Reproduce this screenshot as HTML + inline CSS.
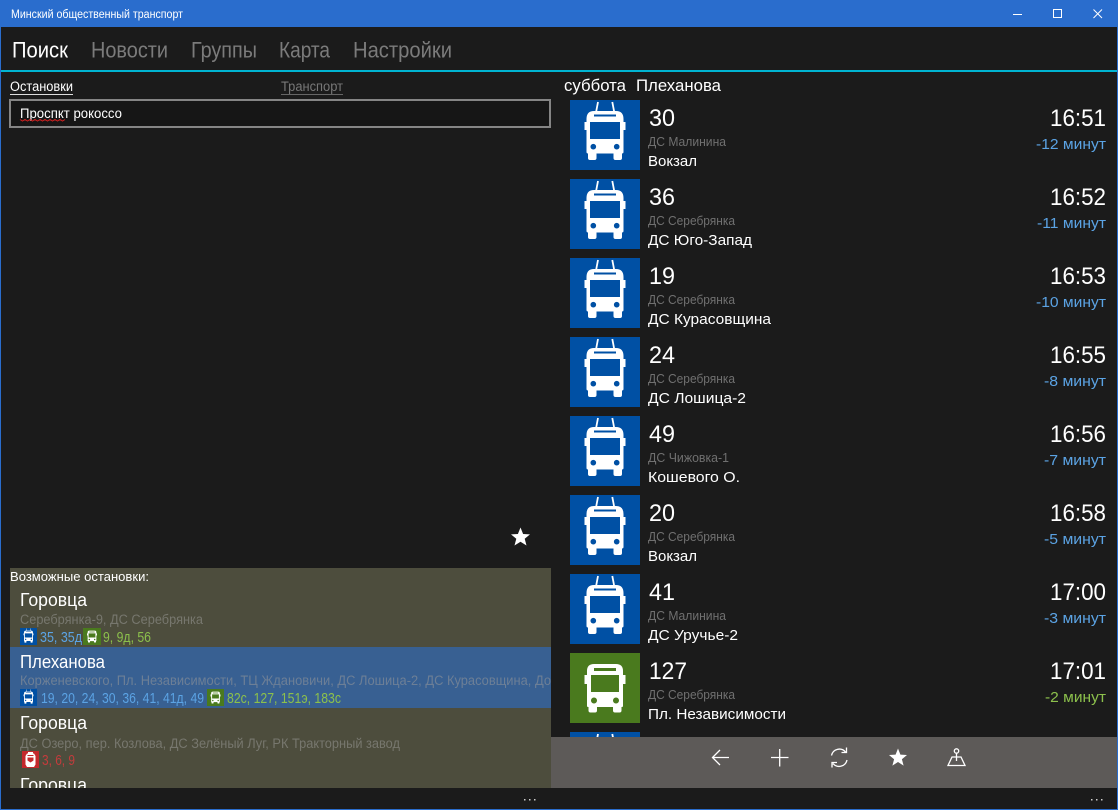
<!DOCTYPE html>
<html lang="ru"><head><meta charset="utf-8"><title>Минский общественный транспорт</title>
<style>
html,body{margin:0;padding:0;background:#1b1b1b;width:1118px;height:810px;overflow:hidden}
svg{display:block;font-family:"Liberation Sans",sans-serif;filter:blur(.3px)}
.n{font-size:22px}.t{font-size:24px;fill:#fff}.d{font-size:12.5px;fill:#707070}.e{font-size:15px;fill:#fff}
.h{font-size:18px;fill:#fff}.s{font-size:13.5px;fill:#77776e}.c{font-size:14.5px}
.b{fill:#5ba3e4}.g{fill:#8cc04c}.r{fill:#c43c3c}
</style></head><body>
<svg width="1118" height="810" viewBox="0 0 1118 810" xmlns="http://www.w3.org/2000/svg">
<defs>
<symbol id="troll" viewBox="0 0 70 70">
<path d="M28 2L26 12.500M42.300 2L44.300 12.500" stroke="#fff" stroke-width="1.800" fill="none"/>
<path fill="#fff" fill-rule="evenodd" d="M24 11H46Q53.500 11 53.500 19V22H55.500V30H53.500V52Q53.500 53.500 52 53.500V58Q52 60 50 60H45.500Q43.500 60 43.500 58V53.500H26.500V58Q26.500 60 24.500 60H20Q18 60 18 58V53.500Q16.500 53.500 16.500 52V30H14.500V22H16.500V19Q16.500 11 24 11ZM20 22V39H50V22ZM24 14.500V16.500H46V14.500ZM23.300 43.900A2.800 2.800 0 1 0 23.301 43.900ZM46.700 43.900A2.800 2.800 0 1 0 46.701 43.900Z"/>
</symbol>
<symbol id="bus" viewBox="0 0 70 70">
<path fill="#fff" fill-rule="evenodd" d="M24 11H46Q53 11 53 18V22H55.500V31H53V53Q53 54 51.500 54V57.500Q51.500 59.500 49.500 59.500H45Q43 59.500 43 57.500V54H27V57.500Q27 59.500 25 59.500H20.500Q18.500 59.500 18.500 57.500V54Q17 54 17 53V31H14.500V22H17V18Q17 11 24 11ZM21 22V39H49V22ZM24 15V18H46V15ZM24 44.500A3 3 0 1 0 24.001 44.500ZM46 44.500A3 3 0 1 0 46.001 44.500Z"/>
</symbol>
<symbol id="tram" viewBox="0 0 17 17">
<path fill="#fff" fill-rule="evenodd" d="M6 1H11V2.500H12L13.500 5V13.500L12 16H5L3.500 13.500V5L5 2.500H6ZM5.500 6.500V9.500L8.500 11.500L11.500 9.500V6.500ZM5.500 4V5H11.500V4Z"/>
</symbol>
<clipPath id="lp"><rect x="10" y="568" width="541" height="220"/></clipPath>
<clipPath id="rp"><rect x="560" y="75" width="558" height="662"/></clipPath>
</defs>

<rect width="1118" height="810" fill="#2a6dcd"/>
<rect x="1" y="27" width="1116" height="782" fill="#1b1b1b"/>
<text x="11" y="18" font-size="11.500" fill="#fff" textLength="172" lengthAdjust="spacingAndGlyphs">Минский общественный транспорт</text>
<path d="M1013 14.500H1022" stroke="#fff" stroke-width="1"/>
<rect x="1053.500" y="9.500" width="8" height="8" fill="none" stroke="#fff"/>
<path d="M1093.500 9.500L1102 18M1102 9.500L1093.500 18" stroke="#fff" stroke-width="1" fill="none"/>

<text class="n" x="12" y="57.500" fill="#fff" textLength="56" lengthAdjust="spacingAndGlyphs">Поиск</text>
<g fill="#7b7b7b">
<text class="n" x="91" y="57.500" textLength="77" lengthAdjust="spacingAndGlyphs">Новости</text>
<text class="n" x="191" y="57.500" textLength="66" lengthAdjust="spacingAndGlyphs">Группы</text>
<text class="n" x="279" y="57.500" textLength="51" lengthAdjust="spacingAndGlyphs">Карта</text>
<text class="n" x="353" y="57.500" textLength="99" lengthAdjust="spacingAndGlyphs">Настройки</text>
</g>
<rect x="1" y="70" width="1116" height="2" fill="#00b4d2"/>

<text x="10" y="91" font-size="13.500" fill="#fff" textLength="63" lengthAdjust="spacingAndGlyphs">Остановки</text>
<rect x="10" y="94" width="63" height="1" fill="#ddd"/>
<text x="281" y="91" font-size="13.500" fill="#777" textLength="62" lengthAdjust="spacingAndGlyphs">Транспорт</text>
<rect x="281" y="94" width="62" height="1" fill="#666"/>
<rect x="10" y="100" width="540" height="27" fill="#161616" stroke="#858585" stroke-width="2"/>
<text x="20" y="118" font-size="14" fill="#fff" textLength="102" lengthAdjust="spacingAndGlyphs">Проспкт рокоссо</text>
<path d="M20 119.500l2.500 1.500l2.500-1.500l2.500 1.500l2.500-1.500l2.500 1.500l2.500-1.500l2.500 1.500l2.500-1.500l2.500 1.500l2.500-1.500l2.500 1.500l2.500-1.500l2.500 1.500l2.500-1.500l2.500 1.500l2.500-1.500l2.500 1.500l2.500-1.500" fill="none" stroke="#d02020" stroke-width="1"/>
<path fill="#fff" d="M520.500 527.500l2.600 6.500 6.900.4-5.300 4.400 1.800 6.700-6-3.700-6 3.700 1.800-6.700-5.300-4.400 6.900-.4z"/>

<!-- left list -->
<rect x="10" y="568" width="541" height="220" fill="#4d4d3d"/>
<g clip-path="url(#lp)">
<rect x="10" y="647" width="541" height="61" fill="#386092"/>
<text x="10" y="581" font-size="13" fill="#fff" textLength="139" lengthAdjust="spacingAndGlyphs">Возможные остановки:</text>

<text class="h" x="20" y="606" textLength="67" lengthAdjust="spacingAndGlyphs">Горовца</text>
<text class="s" x="20" y="624" textLength="183" lengthAdjust="spacingAndGlyphs">Серебрянка-9, ДС Серебрянка</text>
<rect x="20" y="628" width="17" height="17" fill="#0050a4"/><use href="#troll" x="20" y="628" width="17" height="17"/>
<text class="c b" x="40" y="642" textLength="42" lengthAdjust="spacingAndGlyphs">35, 35д</text>
<rect x="83" y="628" width="18" height="17" fill="#4a7a1e"/><use href="#bus" x="83.500" y="628" width="17" height="17"/>
<text class="c g" x="103" y="642" textLength="48" lengthAdjust="spacingAndGlyphs">9, 9д, 56</text>

<text class="h" x="20" y="668" textLength="85" lengthAdjust="spacingAndGlyphs">Плеханова</text>
<text class="s" x="20" y="685" style="fill:#6d7f96" textLength="531" lengthAdjust="spacingAndGlyphs">Корженевского, Пл. Независимости, ТЦ Ждановичи, ДС Лошица-2, ДС Курасовщина, До</text>
<rect x="20" y="689" width="17" height="17" fill="#0050a4"/><use href="#troll" x="20" y="689" width="17" height="17"/>
<text class="c b" x="41" y="703" textLength="163" lengthAdjust="spacingAndGlyphs">19, 20, 24, 30, 36, 41, 41д, 49</text>
<rect x="207" y="689" width="17" height="17" fill="#4a7a1e"/><use href="#bus" x="207" y="689" width="17" height="17"/>
<text class="c g" x="227" y="703" textLength="114" lengthAdjust="spacingAndGlyphs">82с, 127, 151э, 183с</text>

<text class="h" x="20" y="729" textLength="67" lengthAdjust="spacingAndGlyphs">Горовца</text>
<text class="s" x="20" y="748" textLength="380" lengthAdjust="spacingAndGlyphs">ДС Озеро, пер. Козлова, ДС Зелёный Луг, РК Тракторный завод</text>
<rect x="22" y="751" width="17" height="17" fill="#c4282c"/><use href="#tram" x="22" y="751" width="17" height="17"/>
<text class="c r" x="42" y="765" textLength="33" lengthAdjust="spacingAndGlyphs">3, 6, 9</text>

<text class="h" x="20" y="791" textLength="67" lengthAdjust="spacingAndGlyphs">Горовца</text>
</g>

<!-- right list -->
<text x="564" y="91" font-size="17" fill="#fff" textLength="62" lengthAdjust="spacingAndGlyphs">суббота</text>
<text x="636" y="91" font-size="17" fill="#fff" textLength="85" lengthAdjust="spacingAndGlyphs">Плеханова</text>

<g clip-path="url(#rp)">
<g><rect x="570" y="100" width="70" height="70" fill="#0050a4"/><use href="#troll" x="570" y="100" width="70" height="70"/>
<text class="t" x="649" y="126" textLength="26" lengthAdjust="spacingAndGlyphs">30</text><text class="d" x="648" y="146" textLength="78" lengthAdjust="spacingAndGlyphs">ДС Малинина</text><text class="e" x="648" y="166" textLength="49" lengthAdjust="spacingAndGlyphs">Вокзал</text>
<text class="t" x="1050" y="126" textLength="56" lengthAdjust="spacingAndGlyphs">16:51</text><text class="c b" x="1036" y="149" textLength="70" lengthAdjust="spacingAndGlyphs">-12 минут</text></g>

<g transform="translate(0 79)"><rect x="570" y="100" width="70" height="70" fill="#0050a4"/><use href="#troll" x="570" y="100" width="70" height="70"/>
<text class="t" x="649" y="126" textLength="26" lengthAdjust="spacingAndGlyphs">36</text><text class="d" x="648" y="146" textLength="87" lengthAdjust="spacingAndGlyphs">ДС Серебрянка</text><text class="e" x="648" y="166" textLength="104" lengthAdjust="spacingAndGlyphs">ДС Юго-Запад</text>
<text class="t" x="1050" y="126" textLength="56" lengthAdjust="spacingAndGlyphs">16:52</text><text class="c b" x="1037" y="149" textLength="69" lengthAdjust="spacingAndGlyphs">-11 минут</text></g>

<g transform="translate(0 158)"><rect x="570" y="100" width="70" height="70" fill="#0050a4"/><use href="#troll" x="570" y="100" width="70" height="70"/>
<text class="t" x="649" y="126" textLength="26" lengthAdjust="spacingAndGlyphs">19</text><text class="d" x="648" y="146" textLength="87" lengthAdjust="spacingAndGlyphs">ДС Серебрянка</text><text class="e" x="648" y="166" textLength="123" lengthAdjust="spacingAndGlyphs">ДС Курасовщина</text>
<text class="t" x="1050" y="126" textLength="56" lengthAdjust="spacingAndGlyphs">16:53</text><text class="c b" x="1036" y="149" textLength="70" lengthAdjust="spacingAndGlyphs">-10 минут</text></g>

<g transform="translate(0 237)"><rect x="570" y="100" width="70" height="70" fill="#0050a4"/><use href="#troll" x="570" y="100" width="70" height="70"/>
<text class="t" x="649" y="126" textLength="26" lengthAdjust="spacingAndGlyphs">24</text><text class="d" x="648" y="146" textLength="87" lengthAdjust="spacingAndGlyphs">ДС Серебрянка</text><text class="e" x="648" y="166" textLength="98" lengthAdjust="spacingAndGlyphs">ДС Лошица-2</text>
<text class="t" x="1050" y="126" textLength="56" lengthAdjust="spacingAndGlyphs">16:55</text><text class="c b" x="1044" y="149" textLength="62" lengthAdjust="spacingAndGlyphs">-8 минут</text></g>

<g transform="translate(0 316)"><rect x="570" y="100" width="70" height="70" fill="#0050a4"/><use href="#troll" x="570" y="100" width="70" height="70"/>
<text class="t" x="649" y="126" textLength="26" lengthAdjust="spacingAndGlyphs">49</text><text class="d" x="648" y="146" textLength="81" lengthAdjust="spacingAndGlyphs">ДС Чижовка-1</text><text class="e" x="648" y="166" textLength="92" lengthAdjust="spacingAndGlyphs">Кошевого О.</text>
<text class="t" x="1050" y="126" textLength="56" lengthAdjust="spacingAndGlyphs">16:56</text><text class="c b" x="1044" y="149" textLength="62" lengthAdjust="spacingAndGlyphs">-7 минут</text></g>

<g transform="translate(0 395)"><rect x="570" y="100" width="70" height="70" fill="#0050a4"/><use href="#troll" x="570" y="100" width="70" height="70"/>
<text class="t" x="649" y="126" textLength="26" lengthAdjust="spacingAndGlyphs">20</text><text class="d" x="648" y="146" textLength="87" lengthAdjust="spacingAndGlyphs">ДС Серебрянка</text><text class="e" x="648" y="166" textLength="49" lengthAdjust="spacingAndGlyphs">Вокзал</text>
<text class="t" x="1050" y="126" textLength="56" lengthAdjust="spacingAndGlyphs">16:58</text><text class="c b" x="1044" y="149" textLength="62" lengthAdjust="spacingAndGlyphs">-5 минут</text></g>

<g transform="translate(0 474)"><rect x="570" y="100" width="70" height="70" fill="#0050a4"/><use href="#troll" x="570" y="100" width="70" height="70"/>
<text class="t" x="649" y="126" textLength="26" lengthAdjust="spacingAndGlyphs">41</text><text class="d" x="648" y="146" textLength="78" lengthAdjust="spacingAndGlyphs">ДС Малинина</text><text class="e" x="648" y="166" textLength="90" lengthAdjust="spacingAndGlyphs">ДС Уручье-2</text>
<text class="t" x="1050" y="126" textLength="56" lengthAdjust="spacingAndGlyphs">17:00</text><text class="c b" x="1044" y="149" textLength="62" lengthAdjust="spacingAndGlyphs">-3 минут</text></g>

<g transform="translate(0 553)"><rect x="570" y="100" width="70" height="70" fill="#4a7a1e"/><use href="#bus" x="570" y="100" width="70" height="70"/>
<text class="t" x="649" y="126" textLength="38" lengthAdjust="spacingAndGlyphs">127</text><text class="d" x="648" y="146" textLength="87" lengthAdjust="spacingAndGlyphs">ДС Серебрянка</text><text class="e" x="648" y="166" textLength="138" lengthAdjust="spacingAndGlyphs">Пл. Независимости</text>
<text class="t" x="1050" y="126" textLength="56" lengthAdjust="spacingAndGlyphs">17:01</text><text class="c g" x="1045" y="149" textLength="61" lengthAdjust="spacingAndGlyphs">-2 минут</text></g>

<g transform="translate(0 632)"><rect x="570" y="100" width="70" height="70" fill="#0050a4"/><use href="#troll" x="570" y="100" width="70" height="70"/></g>
</g>

<!-- bottom bar -->
<rect x="551" y="737" width="566" height="51" fill="#5d5a58"/>
<g fill="none" stroke="#fff" stroke-width="1.300">
<path d="M729 757.500H713M720 750L712.500 757.500L720 765"/>
<path d="M771 757.500H788.500M779.700 749V766.500"/>
<path d="M831.500 755.500A8 8 0 0 1 845.500 752M846.500 747.500V752.500H841.500M847 760A8 8 0 0 1 833 763.500M832 767.500V762.500H837"/>
<circle cx="956.500" cy="751" r="2.200"/>
<path d="M956.500 753.200V761M952 757H961L965 765.500H948Z"/>
</g>
<path fill="#fff" d="M898 748.500l2.400 6.100 6.600.4-5.100 4.200 1.700 6.400-5.600-3.600-5.600 3.600 1.700-6.400-5.100-4.200 6.600-.4z"/>

<g fill="#ccc">
<rect x="524" y="799" width="1.500" height="1.500"/><rect x="529" y="799" width="1.500" height="1.500"/><rect x="534" y="799" width="1.500" height="1.500"/>
<rect x="1091" y="799" width="1.500" height="1.500"/><rect x="1096" y="799" width="1.500" height="1.500"/><rect x="1101" y="799" width="1.500" height="1.500"/>
</g>
</svg>
</body></html>
